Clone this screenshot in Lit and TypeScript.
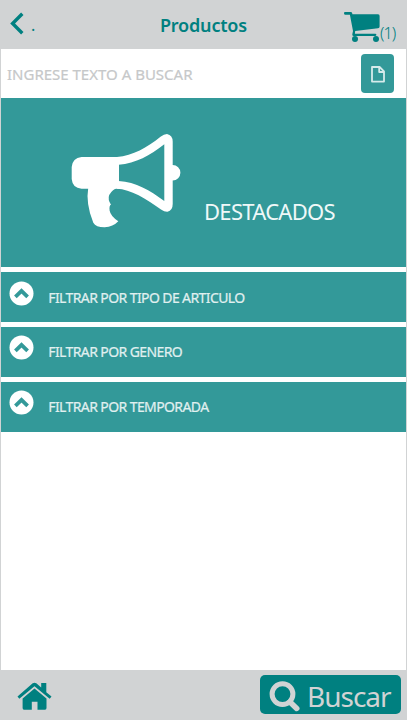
import { LitElement, html, css } from "lit";
import { customElement } from "lit/decorators.js";

@customElement("app-root")
export class AppRoot extends LitElement {
  static styles = css`
    :host {
      display: flex;
      flex-direction: column;
      box-sizing: border-box;
      width: 407px;
      height: 720px;
      overflow: hidden;
      background: #d1d3d4;
      color: #008080;
      font-family: "Noto Sans", "Open Sans", sans-serif;
      white-space: nowrap;
    }
    svg { display: block; flex: none; }
    header {
      display: grid;
      grid-template-columns: 160px 1fr 63px;
      height: 49px;
      flex: none;
    }
    .back { display: flex; padding: 12px 0 0 10px; }
    .dot { font-size: 16px; line-height: 24px; margin: 1px 0 0 7px; }
    .title {
      margin: 0;
      font: 600 18px/24px "Noto Sans", sans-serif;
      letter-spacing: -0.2px;
      padding-top: 13px;
    }
    .cart { display: flex; padding-top: 11px; }
    .count { font-size: 16px; font-weight: 300; line-height: 22px; margin-top: 11px; letter-spacing: -0.9px; }
    main {
      flex: 1;
      display: flex;
      flex-direction: column;
      background: #fff;
      margin: 0 1.5px 0 1.3px;
    }
    .search {
      display: flex;
      justify-content: space-between;
      height: 49px;
      flex: none;
      box-sizing: border-box;
      padding: 5px 11.5px 0 5.7px;
    }
    .hint { color: #c6c8c9; font-size: 15px; line-height: 22px; margin-top: 9px; letter-spacing: 0; -webkit-text-stroke: 0.2px #c6c8c9; }
    .doc {
      width: 33px;
      height: 39px;
      border: 0;
      border-radius: 4px;
      background: #339999;
      padding: 1px 0 0;
      display: flex;
      align-items: center;
      justify-content: center;
    }
    .hero {
      background: #339999;
      height: 169px;
      margin-bottom: 0.5px;
      flex: none;
      display: flex;
      color: #eff8f8;
    }
    .horn { margin: 36px 0 0 69.7px; }
    .hero-text { font-size: 22px; line-height: 30px; margin: 98px 0 0 22px; letter-spacing: -0.7px; }
    .filter {
      background: #339999;
      height: 50.25px;
      flex: none;
      margin-top: 4.5px;
      display: flex;
      color: #e0f0f0;
      -webkit-text-stroke: 0.2px #e0f0f0;
    }
    .chev { margin: 8.6px 0 0 8px; }
    .filter span { font-size: 14px; line-height: 20px; margin: 15.6px 0 0 14px; letter-spacing: -0.6px; }
    footer {
      height: 50px;
      flex: none;
      display: flex;
      justify-content: space-between;
      box-sizing: border-box;
      padding: 5px 6px 0 17px;
    }
    .home { margin-top: 7px; }
    .buscar {
      width: 141px;
      height: 39px;
      box-sizing: border-box;
      border: 0;
      border-radius: 5px;
      background: #008080;
      color: #d1d3d4;
      display: flex;
      padding: 6px 0 0 9px;
      font: 400 28px/32px "Noto Sans", sans-serif;
    }
    .buscar span { margin: -1px 0 0 7px; letter-spacing: -1px; }
  `;

  private filters = ["TIPO DE ARTICULO", "GENERO", "TEMPORADA"];

  render() {
    return html`
      <header>
        <div class="back">
          <svg width="14" height="23" viewBox="0 0 14 23" fill="none" stroke="#008080" stroke-width="3.4"><path d="M12.3 1.8 2.6 11.5 12.3 21.2" /></svg>
          <span class="dot">.</span>
        </div>
        <h1 class="title">Productos</h1>
        <div class="cart">
          <svg width="36" height="32" viewBox="0 0 36 32" fill="#008080">
            <path d="M1 1H6.7Q7.9 1 8.2 2.2L8.4 3.3H34Q35.7 3.3 35.6 5V15.4Q35.6 17 34 17.2L11.2 20 10.9 22.7H31.3Q32.4 22.7 32.4 23.8T31.3 25H9.4Q8 24.9 8.3 23.3L9 20 5.9 3.7H1Q0 3.5 0 2.3T1 1Z" />
            <circle cx="11" cy="28" r="3" /><circle cx="32" cy="28" r="3" />
          </svg>
          <span class="count">(1)</span>
        </div>
      </header>
      <main>
        <div class="search">
          <span class="hint">INGRESE TEXTO A BUSCAR</span>
          <button class="doc" aria-label="Nuevo">
            <svg width="14" height="17" viewBox="0 0 14 17" fill="none" stroke="#d6ebeb" stroke-width="1.8" stroke-linejoin="round"><path d="M1 1H8.6L13 5.4V15.6H1ZM8.2 1.4V6H12.6" /></svg>
          </button>
        </div>
        <section class="hero">
          <svg class="horn" width="111" height="94" viewBox="0 0 111 94" fill="#fff">
            <path d="M10.5 23H48V54.7H10.5Q1.5 54 0.7 45V33Q1.5 24 10.5 23Z" />
            <path d="M17.3 53H48Q41 55.5 38.2 61Q36.5 65.5 40 70.8Q38 71.5 38.6 76.5Q39.5 82 47.3 87.3Q42 93 33.7 93.2Q25 93.3 22.3 88.7Q14.5 70 17.3 53Z" />
            <path fill-rule="evenodd" d="M46 23C62 21.5 76 13.5 89.5 2.7Q93 0 96 0Q101.7 1.3 101.7 7.5V31A7.7 7.7 0 0 1 101.7 46.4V70Q101.7 76.5 96.5 77.8Q93.5 78 90 75.5C76 65 59 55 46 54.7ZM47.7 30.7V47C65 48 79 56.5 93.3 67V10.3C79 21.5 65 29.5 47.7 30.7Z" />
          </svg>
          <span class="hero-text">DESTACADOS</span>
        </section>
        ${this.filters.map(
          (name) => html`
            <div class="filter">
              <svg class="chev" width="25" height="25" viewBox="0 0 25 25"><circle cx="12.5" cy="12.5" r="12" fill="#fff" /><path d="M6.4 15.8 12.5 9.8 18.6 15.8" fill="none" stroke="#339999" stroke-width="3.8" /></svg>
              <span>FILTRAR POR ${name}</span>
            </div>
          `
        )}
      </main>
      <footer>
        <svg class="home" width="35" height="28" viewBox="0 0 35 28" fill="#008080">
          <path d="M17.5 6.5 29.5 16.5V26Q29.5 27.7 28 27.7H20.5V19.8H14.8V27.7H7Q5.6 27.7 5.6 26V16.5Z" />
          <path d="M24.2 1H29.3V10.2L34.5 14.5 32.7 16.7 17.5 4.2 2.3 16.7 0.5 14.5 15.7 1.3Q17.5 0 19.3 1.3L24.2 5.6Z" />
        </svg>
        <button class="buscar">
          <svg width="31" height="31" viewBox="0 0 31 31" fill="none" stroke="#d1d3d4"><circle cx="13.5" cy="13.1" r="10.4" stroke-width="5" /><path d="M21 21 27.7 27.4" stroke-width="5.6" stroke-linecap="round" /></svg>
          <span>Buscar</span>
        </button>
      </footer>
    `;
  }
}
